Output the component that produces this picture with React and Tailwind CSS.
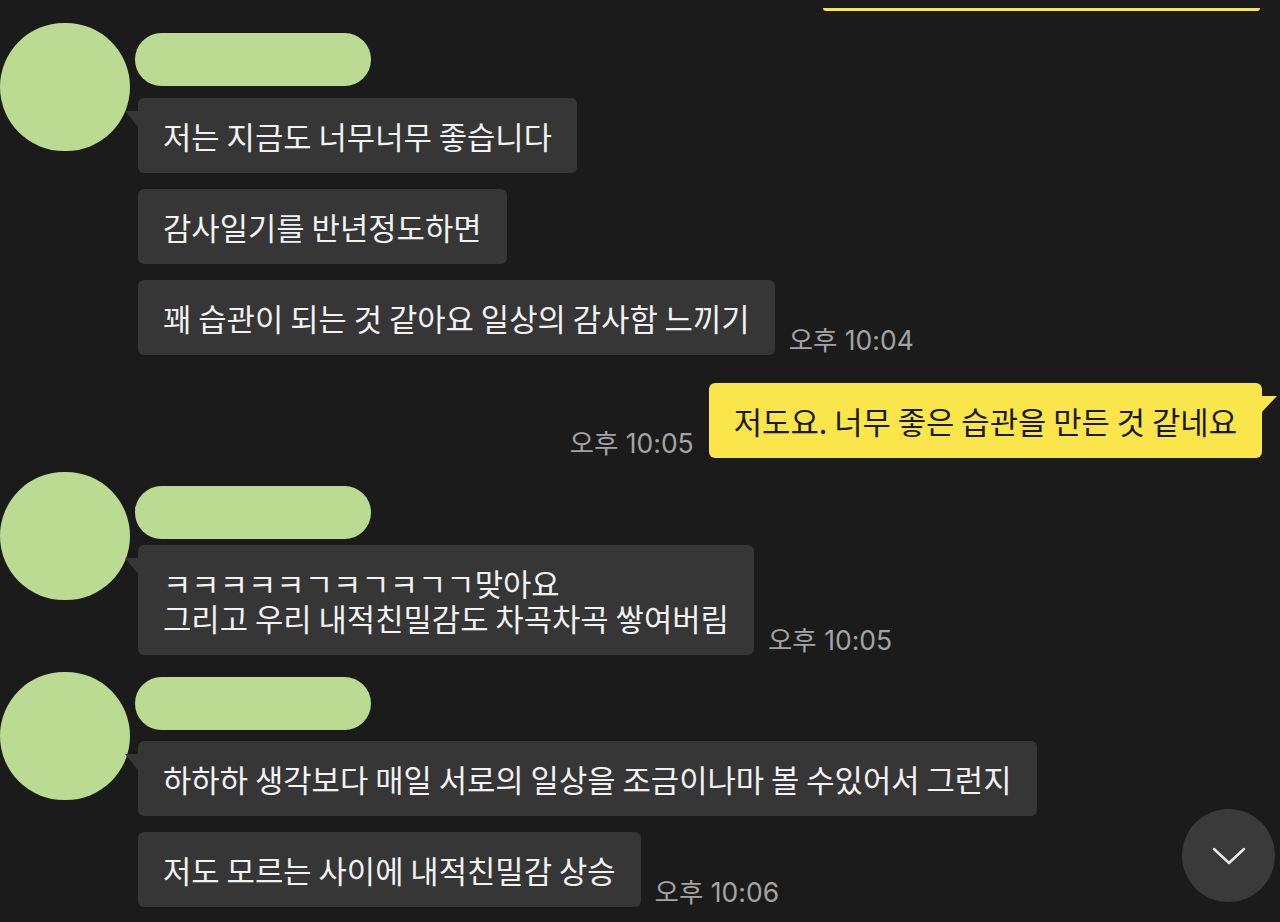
import React from "react";

const FONT = { fontFamily: '"Noto Sans CJK KR", "Noto Sans", sans-serif' };
const TIME_FONT = { fontFamily: 'Inter, "Noto Sans CJK KR", sans-serif' };

function GrayBubble({ children, tail }) {
  return (
    <div className="relative rounded-[6px] bg-[#363636] px-[25px] py-[20px] text-[30.8px] leading-[35px] text-[#f2f2f2] whitespace-pre">
      {tail && (
        <svg className="absolute left-[-13px] top-[12px]" width="14" height="18" viewBox="0 0 14 18">
          <path d="M0 1 L14 1 L14 18 Z" fill="#363636" />
        </svg>
      )}
      {children}
    </div>
  );
}

function Time({ children }) {
  return (
    <div className="mb-[3px] text-[26.5px] leading-[24px] text-[#a3a3a3] whitespace-nowrap" style={TIME_FONT}>{children}</div>
  );
}

function Avatar() {
  return <div className="h-[128px] w-[130px] shrink-0 rounded-full bg-[#bbdb93]" />;
}

function Pill() {
  return <div className="h-[53px] w-[236px] rounded-full bg-[#bbdb93]" />;
}

export default function App() {
  return (
    <div className="relative h-[922px] w-full overflow-hidden bg-[#1b1b1b] pt-[8px]" style={FONT}>
      <div className="flex justify-end pr-[20px]">
        <div className="h-[3px] w-[437px] rounded-b-[3px] bg-[#fae54a]" />
      </div>

      {/* Group 1 */}
      <div className="mt-[12px] flex items-start">
        <Avatar />
        <div className="ml-[5px] flex flex-col pt-[10px]">
          <Pill />
          <div className="ml-[3px] mt-[12px] flex flex-col gap-[16px]">
            <div className="flex items-end">
              <GrayBubble tail>저는 지금도 너무너무 좋습니다</GrayBubble>
            </div>
            <div className="flex items-end">
              <GrayBubble>감사일기를 반년정도하면</GrayBubble>
            </div>
            <div className="flex items-end gap-[14px]">
              <GrayBubble>꽤 습관이 되는 것 같아요 일상의 감사함 느끼기</GrayBubble>
              <Time>오후 10:04</Time>
            </div>
          </div>
        </div>
      </div>

      {/* My message */}
      <div className="mt-[28px] flex items-end justify-end gap-[15px] pr-[18px]">
        <Time>오후 10:05</Time>
        <div className="relative rounded-[6px] bg-[#fae54a] px-[25px] py-[20px] text-[30.8px] leading-[35px] text-[#1a1a1a] whitespace-pre">
          <svg className="absolute right-[-15px] top-[12px]" width="16" height="18" viewBox="0 0 16 18">
            <path d="M0 1 L16 1 L0 18 Z" fill="#fae54a" />
          </svg>
          저도요. 너무 좋은 습관을 만든 것 같네요
        </div>
      </div>

      {/* Group 2 */}
      <div className="mt-[14px] flex items-start">
        <Avatar />
        <div className="relative ml-[5px] flex flex-col pt-[14px]">
          <div className="absolute left-0 top-[35px] h-[2px] w-[2px] rounded-full bg-[#cfcfcf]" />
          <Pill />
          <div className="ml-[3px] mt-[6px] flex items-end gap-[14px]">
            <GrayBubble tail>{"ㅋㅋㅋㅋㅋㄱㅋㄱㅋㄱㄱ맞아요\n그리고 우리 내적친밀감도 차곡차곡 쌓여버림"}</GrayBubble>
            <Time>오후 10:05</Time>
          </div>
        </div>
      </div>

      {/* Group 3 */}
      <div className="mt-[17px] flex items-start">
        <Avatar />
        <div className="ml-[5px] flex flex-col pt-[5px]">
          <Pill />
          <div className="ml-[3px] mt-[11px] flex flex-col gap-[16px]">
            <div className="flex items-end">
              <GrayBubble tail>하하하 생각보다 매일 서로의 일상을 조금이나마 볼 수있어서 그런지</GrayBubble>
            </div>
            <div className="flex items-end gap-[14px]">
              <GrayBubble>저도 모르는 사이에 내적친밀감 상승</GrayBubble>
              <Time>오후 10:06</Time>
            </div>
          </div>
        </div>
      </div>

      {/* Scroll down button */}
      <div className="absolute left-[1182px] top-[809px] flex h-[93px] w-[93px] items-center justify-center rounded-full bg-[#3a3a3a]">
        <svg width="34" height="20" viewBox="0 0 34 20" fill="none">
          <path d="M2 3 L17 17 L32 3" stroke="#e8e8e8" strokeWidth="2.5" strokeLinecap="round" strokeLinejoin="round" />
        </svg>
      </div>
    </div>
  );
}
